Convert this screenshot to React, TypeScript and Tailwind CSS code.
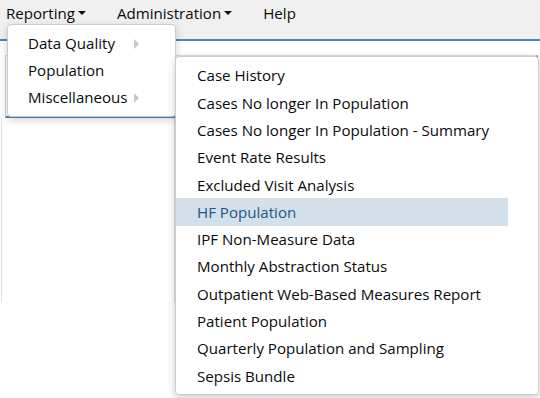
const reports = [
  'Case History',
  'Cases No longer In Population',
  'Cases No longer In Population - Summary',
  'Event Rate Results',
  'Excluded Visit Analysis',
  'HF Population',
  'IPF Non-Measure Data',
  'Monthly Abstraction Status',
  'Outpatient Web-Based Measures Report',
  'Patient Population',
  'Quarterly Population and Sampling',
  'Sepsis Bundle',
]

function Caret() {
  return <span className="ml-[3px] inline-block h-0 w-0 border-x-[4px] border-t-[4px] border-x-transparent border-t-[#111]" />
}

function SubArrow() {
  return <span className="absolute left-[126px] top-1/2 h-0 w-0 -translate-y-1/2 border-y-[5px] border-l-[5px] border-y-transparent border-l-[#c8c8c8]" />
}

export default function App() {
  return (
    <div className="relative h-[398px] w-[540px] overflow-hidden bg-white text-[15.1px] text-[#0a0a0a]" style={{ fontFamily: '"Open Sans", "Noto Sans", sans-serif' }}>
      {/* nav */}
      <div className="flex h-[41px] items-start gap-[31px] border-b-[2px] border-[#4a89bd] bg-[#f0f0f0] pl-[6px] pt-[2px] leading-[22px]">
        <span className="flex items-center">Reporting<Caret /></span>
        <span className="flex items-center">Administration<Caret /></span>
        <span>Help</span>
      </div>

      {/* page content behind menus */}
      <div className="ml-[5px] mr-[2px] mt-[14px] h-[63px] border-b-[2px] border-l border-r-[2px] border-t border-[#ccc] border-b-[#4a89bd] border-r-[#4a89bd] border-t-[#ddd]" />
      <div className="ml-[1px] mr-[2px] grid h-[185px] grid-cols-[173px_1fr] border-x border-[#e0e0e0]">
        <div className="border-r border-[#ddd]" />
        <div />
      </div>

      {/* first menu */}
      <div className="absolute left-[7px] top-[24px] w-[169px] rounded-[4px] border border-[#ccc] bg-white py-[5px] shadow-[0_3px_8px_rgba(0,0,0,0.18)]">
        <div className="relative flex h-[27px] items-center pl-[20px]">Data Quality<SubArrow /></div>
        <div className="relative flex h-[27px] items-center pl-[20px]">Population</div>
        <div className="relative flex h-[27px] items-center pl-[20px]">Miscellaneous<SubArrow /></div>
      </div>

      {/* second menu */}
      <div className="absolute left-[175px] top-[56px] w-[364px] rounded-[4px] border border-[#ccc] bg-white pb-[4px] pt-[5px] shadow-[0_3px_8px_rgba(0,0,0,0.2)]">
        {reports.map((r) => (
          <div
            key={r}
            className={
              r === 'HF Population'
                ? 'mr-[30px] flex h-[27.3px] items-center bg-[#d3e0ea] pl-[21px] text-[#1f5587]'
                : 'mr-[30px] flex h-[27.3px] items-center pl-[21px]'
            }
          >
            {r}
          </div>
        ))}
      </div>
    </div>
  )
}
